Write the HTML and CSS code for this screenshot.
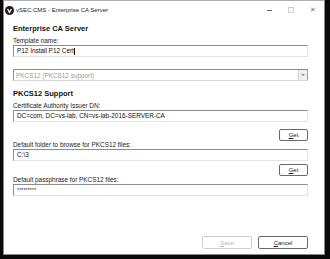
FILE: index.html
```html
<!DOCTYPE html>
<html>
<head>
    <title>vSEC:CMS - Enterprise CA Server</title>
    <link rel="stylesheet" href="styles.css">
</head>
<body>
    <div class="window">
        <div class="titlebar">
            <svg class="app-icon" width="9" height="9" viewBox="0 0 9 9">
                <circle cx="4.5" cy="4.5" r="4.5" fill="#2a1414"/>
                <polyline points="2.6,3 4.5,6.4 6.4,3" fill="none" stroke="#fff" stroke-width="1.3"/>
            </svg>
            <span class="title">vSEC:CMS - Enterprise CA Server</span>
            <div class="controls">
                <span class="ctl ctl-min"></span>
                <span class="ctl ctl-max"></span>
                <span class="ctl ctl-close">&#x2715;</span>
            </div>
        </div>

        <div class="content">
            <h2 class="section">Enterprise CA Server</h2>
            <label class="label">Template name:</label>
            <div class="field">P12 Install P12 Cert<span class="caret"></span></div>

            <div class="select">
                <span class="select-text">PKCS12 (PKCS12 support)</span>
                <span class="select-arrow"></span>
            </div>

            <h2 class="section second">PKCS12 Support</h2>
            <label class="label">Certificate Authority Issuer DN:</label>
            <div class="field">DC=com, DC=vs-lab, CN=vs-lab-2016-SERVER-CA</div>
            <div class="btn-row"><button class="btn small"><u>G</u>et</button></div>

            <label class="label tight">Default folder to browse for PKCS12 files:</label>
            <div class="field">C:\3</div>
            <div class="btn-row close"><button class="btn small"><u>G</u>et</button></div>

            <label class="label tight">Default passphrase for PKCS12 files:</label>
            <div class="field dots">*********</div>

            <div class="footer">
                <button class="btn wide" disabled><u>S</u>ave</button>
                <button class="btn wide"><u>C</u>ancel</button>
            </div>
        </div>
    </div>
</body>
</html>
```

FILE: styles.css
```css
body {
    margin: 0;
    background-color: #0a0a0a;
    font-family: 'Liberation Sans', Arial, sans-serif;
    width: 330px;
    height: 259px;
    overflow: hidden;
}

.window {
    margin-left: 3px;
    width: 320px;
    height: 253px;
    background-color: #ffffff;
    border: 1px solid #8a8a8a;
    border-top-color: #b0b0b0;
    display: flex;
    flex-direction: column;
}

/* Title bar */
.titlebar {
    height: 18px;
    display: flex;
    align-items: center;
    padding-left: 1px;
}

.app-icon {
    margin-right: 2px;
}

.title {
    font-size: 6px;
    color: #222;
}

.controls {
    margin-left: auto;
    display: flex;
    align-items: center;
    height: 100%;
}

.ctl {
    width: 22px;
    height: 100%;
    display: flex;
    align-items: center;
    justify-content: center;
    color: #777;
    font-size: 7px;
}

.ctl-min::before {
    content: "";
    width: 5px;
    height: 1px;
    background-color: #666;
}

.ctl-max::before {
    content: "";
    width: 4px;
    height: 4px;
    border: 1px solid #ccc;
}

.ctl-close {
    width: 22px;
    padding-right: 0;
}

/* Content */
.content {
    flex: 1;
    display: flex;
    flex-direction: column;
    padding: 5px 16px 4px 9px;
}

.section {
    font-size: 7.5px;
    font-weight: 700;
    color: #111;
    margin: 0;
    line-height: 10px;
}

.section.second {
    margin-top: 8px;
}

.label {
    font-size: 6.4px;
    color: #222;
    line-height: 9px;
    margin-top: 2px;
}

.label.tight {
    margin-top: -1px;
}

.field {
    height: 12px;
    box-sizing: border-box;
    border: 1px solid #e4e4e4;
    border-top: 1px solid #8c8c8c;
    border-left: 1px solid #8c8c8c;
    font-size: 6.4px;
    line-height: 10px;
    padding-left: 3px;
    color: #111;
    display: flex;
    align-items: center;
}

.caret {
    width: 1px;
    height: 7px;
    background-color: #111;
}

.field.dots {
    font-size: 5px;
    letter-spacing: 0.2px;
}

.select {
    margin-top: 12px;
    height: 12px;
    box-sizing: border-box;
    border: 1px solid #8c8c8c;
    border-right-color: #a0a0a0;
    border-bottom-color: #d8d8d8;
    display: flex;
    align-items: center;
}

.select-text {
    flex: 1;
    font-size: 6.4px;
    color: #9a9a9a;
    padding-left: 2px;
}

.select-arrow {
    width: 8px;
    height: 10px;
    border-left: 1px solid #d0d0d0;
    background-color: #f0f0f0;
    display: flex;
    align-items: center;
    justify-content: center;
}

.select-arrow::before {
    content: "";
    border-left: 2px solid transparent;
    border-right: 2px solid transparent;
    border-top: 2px solid #888;
}

.btn-row {
    display: flex;
    justify-content: flex-end;
    margin-top: 7px;
}

.btn-row.close {
    margin-top: 3px;
}

.btn {
    font-family: 'Liberation Sans', Arial, sans-serif;
    font-size: 6px;
    background-color: #ffffff;
    border: 1px solid #6a6a6a;
    border-radius: 2px;
    color: #222;
    padding: 0;
    height: 12px;
    line-height: 10px;
}

.btn.small {
    width: 29px;
}

.btn:disabled {
    border-color: #cfcfcf;
    color: #b5b5b5;
}

.footer {
    margin-top: auto;
    display: flex;
    justify-content: flex-end;
    gap: 6px;
    margin-bottom: 1px;
}

.btn.wide {
    width: 50px;
    height: 13px;
}
```
